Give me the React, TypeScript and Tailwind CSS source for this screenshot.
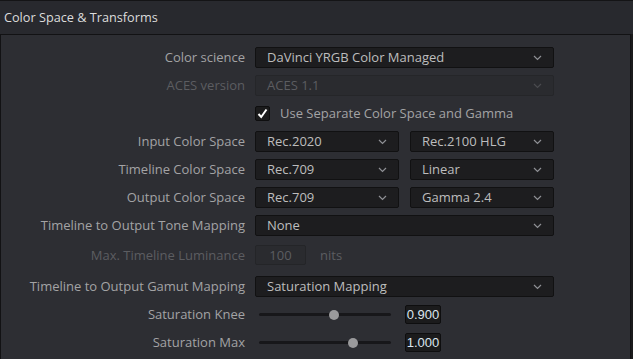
import React from "react";

function Chevron({ dim }: { dim?: boolean }) {
  return (
    <svg width="9" height="6" viewBox="0 0 9 6" className="shrink-0">
      <path
        d="M1 1 L4.5 4.5 L8 1"
        fill="none"
        stroke={dim ? "#4a4b4f" : "#8f9095"}
        strokeWidth="1.2"
      />
    </svg>
  );
}

function Select({ value, width, disabled }: { value: string; width: string; disabled?: boolean }) {
  return (
    <div
      className={`${width} h-full flex items-center justify-between pl-[11px] pr-[11px] rounded-[2px] border ${
        disabled ? "bg-[#2a2b2f] border-[#252629] text-[#5c5d61]" : "bg-[#1d1d1f] border-[#111112] text-[#bdbdbe]"
      }`}
    >
      <span>{value}</span>
      <Chevron dim={disabled} />
    </div>
  );
}

function Row({ label, disabled, className, children }: { label: string; disabled?: boolean; className: string; children?: React.ReactNode }) {
  return (
    <div className={`flex items-center ${className}`}>
      <div className={`w-[244px] text-right ${disabled ? "text-[#5c5d61]" : "text-[#a3a3a5]"}`}>{label}</div>
      <div className="ml-[10px] flex items-center h-full gap-[11px]">{children}</div>
    </div>
  );
}

function Slider({ pos, value }: { pos: number; value: string }) {
  return (
    <div className="flex items-center gap-[14px] h-full">
      <div className="relative w-[132px] h-[3px] ml-[4px] bg-[#17171a] rounded-full">
        <div
          className="absolute top-1/2 w-[10px] h-[10px] -mt-[5px] -ml-[5px] rounded-full bg-[#9a9a9c]"
          style={{ left: `${pos}px` }}
        />
      </div>
      <div className="w-[36px] h-full flex items-center justify-center bg-[#1b1b1c] border border-[#0e0e0f] rounded-[2px] text-[#dce6ef] font-['Liberation_Sans',sans-serif] text-[13px]">
        {value}
      </div>
    </div>
  );
}

export default function App() {
  return (
    <div className="w-[633px] h-[359px] bg-[#1a1a1b] overflow-hidden font-['Open_Sans',sans-serif] text-[13px] leading-none">
      <div className="h-[34px] bg-[#28292e] border-t border-[#141416] flex items-center pl-[4px] text-[#dcdcdc] text-[12.7px]">
        Color Space &amp; Transforms
      </div>
      <div className="w-[631px] h-[325px] bg-[#2d2e33] border-t border-l border-r border-[#121214] pt-[12px] flex flex-col">
        <Row label="Color science" className="h-[21px]">
          <Select value="DaVinci YRGB Color Managed" width="w-[299px]" />
        </Row>
        <Row label="ACES version" disabled className="h-[21px] mt-[7px]">
          <Select value="ACES 1.1" width="w-[299px]" disabled />
        </Row>
        <Row label="" className="h-[21px] mt-[7px]">
          <div className="flex items-center gap-[10px] text-[#a3a3a5]">
            <div className="w-[15px] h-[15px] bg-[#1b1b1c] border border-[#0e0e0f] rounded-[2px] flex items-center justify-center">
              <svg width="11" height="11" viewBox="0 0 11 11">
                <path d="M1.5 6 L4.2 9 L9.5 1.5" fill="none" stroke="#ffffff" strokeWidth="2" />
              </svg>
            </div>
            <span>Use Separate Color Space and Gamma</span>
          </div>
        </Row>
        <Row label="Input Color Space" className="h-[21px] mt-[7px]">
          <Select value="Rec.2020" width="w-[144px]" />
          <Select value="Rec.2100 HLG" width="w-[144px]" />
        </Row>
        <Row label="Timeline Color Space" className="h-[21px] mt-[7px]">
          <Select value="Rec.709" width="w-[144px]" />
          <Select value="Linear" width="w-[144px]" />
        </Row>
        <Row label="Output Color Space" className="h-[21px] mt-[7px]">
          <Select value="Rec.709" width="w-[144px]" />
          <Select value="Gamma 2.4" width="w-[144px]" />
        </Row>
        <Row label="Timeline to Output Tone Mapping" className="h-[21px] mt-[7px]">
          <Select value="None" width="w-[299px]" />
        </Row>
        <Row label="Max. Timeline Luminance" disabled className="h-[20px] mt-[9px]">
          <div className="w-[51px] h-full flex items-center justify-center bg-[#2a2b2f] border border-[#242528] rounded-[2px] text-[#5c5d61]">
            100
          </div>
          <span className="ml-[3px] text-[#5c5d61]">nits</span>
        </Row>
        <Row label="Timeline to Output Gamut Mapping" className="h-[21px] mt-[11px]">
          <Select value="Saturation Mapping" width="w-[299px]" />
        </Row>
        <Row label="Saturation Knee" className="h-[19px] mt-[8px]">
          <Slider pos={75} value="0.900" />
        </Row>
        <Row label="Saturation Max" className="h-[19px] mt-[9px]">
          <Slider pos={94} value="1.000" />
        </Row>
      </div>
    </div>
  );
}
